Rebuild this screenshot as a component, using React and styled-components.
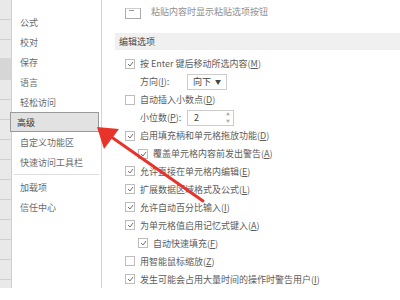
import styled, { createGlobalStyle } from "styled-components";

const GlobalStyle = createGlobalStyle`
    html, body { margin: 0; padding: 0; background: #fff; }
    body {
        font-family: "Noto Sans CJK SC", "Noto Sans", sans-serif;
        font-size: 9px;
        color: #5c5c5c;
    }
`;

const Page = styled.div`
    position: relative;
    width: 400px;
    height: 300px;
    overflow: hidden;
    display: flex;
    align-items: flex-start;
`;

const Sheet = styled.div`
    width: 11px;
    height: 288px;
    flex-shrink: 0;
    background:
        linear-gradient(#d6d6d6, #d6d6d6) 0 58px / 100% 22px no-repeat,
        repeating-linear-gradient(#e9e9e9 0 19px, #cfcfcf 19px 20px);
`;

const Sidebar = styled.div`
    width: 91px;
    height: 288px;
    flex-shrink: 0;
    border-left: 1px solid #cfcfcf;
    border-right: 1px solid #d4d4d4;
    padding-top: 12px;
    box-sizing: border-box;
    display: flex;
    flex-direction: column;
`;

const NavItem = styled.div`
    height: 20px;
    display: flex;
    align-items: center;
    padding-left: ${(p) => (p.$active ? "6px" : "8px")};
    margin-right: 2px;
    margin-left: ${(p) => (p.$active ? "-2px" : "0")};
    box-sizing: border-box;
    color: ${(p) => (p.$active ? "#333" : "#6a6a6a")};
    background: ${(p) => (p.$active ? "#e2e2e2" : "transparent")};
    border: ${(p) => (p.$active ? "1px solid #9a9a9a" : "none")};
`;

const NavSep = styled.div`
    height: 1px;
    background: #dedede;
    margin: 2px;
`;

const Main = styled.div`
    flex: 1;
    height: 288px;
    padding-left: 13px;
    display: flex;
    flex-direction: column;
`;

const TopRow = styled.div`
    height: 20px;
    display: flex;
    align-items: center;
    gap: 10px;
    padding-left: 10px;
    margin-top: 2px;
    color: #909090;
`;

const TopIcon = styled.div`
    width: 14px;
    height: 9px;
    margin-top: 4px;
    border: 1px solid #aaa;
    border-top-color: #ccc;
    position: relative;
    &::after {
        content: "";
        position: absolute;
        left: 3px;
        top: 1px;
        width: 5px;
        height: 1px;
        background: #999;
    }
`;

const SectionHead = styled.div`
    margin-top: 11px;
    height: 17px;
    background: #f0f0f0;
    display: flex;
    align-items: center;
    padding-left: 4px;
    color: #4a4a4a;
    margin-bottom: 5px;
`;

const Row = styled.div`
    height: 18px;
    display: flex;
    align-items: center;
    padding-left: ${(p) => (p.$indent ? "23px" : "10px")};
    white-space: nowrap;
`;

const Box = styled.span`
    width: 8px;
    height: 8px;
    border: 1px solid #bdbdbd;
    background: #fff;
    margin-right: 5px;
    flex-shrink: 0;
    display: flex;
    align-items: center;
    justify-content: center;
`;

const Label = styled.span`
    width: 47px;
    margin-left: 15px;
`;

const Select = styled.div`
    width: 40px;
    height: 16px;
    box-sizing: border-box;
    border: 1px solid #cccccc;
    display: flex;
    align-items: center;
    justify-content: space-between;
    padding: 0 5px;
    color: #444;
`;

const Spinner = styled.div`
    width: 47px;
    height: 16px;
    box-sizing: border-box;
    border: 1px solid #cccccc;
    display: flex;
    align-items: center;
    justify-content: space-between;
    padding: 0 3px 0 6px;
    color: #444;
`;

const Arrows = styled.div`
    display: flex;
    flex-direction: column;
    gap: 3px;
    font-size: 4px;
    line-height: 4px;
    color: #b0b0b0;
`;

const Overlay = styled.svg`
    position: absolute;
    left: 0;
    top: 0;
    pointer-events: none;
`;

const Check = () => (
    <svg width="7" height="6" viewBox="0 0 7 6">
        <path d="M1 3 L3 5 L6 1" fill="none" stroke="#707070" strokeWidth="1" />
    </svg>
);

const CheckRow = ({ checked, indent, children }) => (
    <Row $indent={indent}>
        <Box>{checked && <Check />}</Box>
        <span>{children}</span>
    </Row>
);

const navItems = ["公式", "校对", "保存", "语言", "轻松访问", "高级", "自定义功能区", "快速访问工具栏"];

export default function App() {
    return (
        <>
            <GlobalStyle />
            <Page>
                <Sheet />
                <Sidebar>
                    {navItems.map((n) => (
                        <NavItem key={n} $active={n === "高级"}>{n}</NavItem>
                    ))}
                    <NavSep />
                    <NavItem>加载项</NavItem>
                    <NavItem>信任中心</NavItem>
                </Sidebar>
                <Main>
                    <TopRow>
                        <TopIcon />
                        <span>粘贴内容时显示粘贴选项按钮</span>
                    </TopRow>
                    <SectionHead>编辑选项</SectionHead>
                    <CheckRow checked>按 Enter 键后移动所选内容(<u>M</u>)</CheckRow>
                    <Row>
                        <Label>方向(<u>I</u>):</Label>
                        <Select>
                            <span>向下</span>
                            <span style={{ fontSize: 6 }}>▼</span>
                        </Select>
                    </Row>
                    <CheckRow>自动插入小数点(<u>D</u>)</CheckRow>
                    <Row>
                        <Label>小位数(<u>P</u>):</Label>
                        <Spinner>
                            <span>2</span>
                            <Arrows>
                                <span>▲</span>
                                <span>▼</span>
                            </Arrows>
                        </Spinner>
                    </Row>
                    <CheckRow checked>启用填充柄和单元格拖放功能(<u>D</u>)</CheckRow>
                    <CheckRow checked indent>覆盖单元格内容前发出警告(<u>A</u>)</CheckRow>
                    <CheckRow checked>允许直接在单元格内编辑(<u>E</u>)</CheckRow>
                    <CheckRow checked>扩展数据区域格式及公式(<u>L</u>)</CheckRow>
                    <CheckRow checked>允许自动百分比输入(<u>I</u>)</CheckRow>
                    <CheckRow checked>为单元格值启用记忆式键入(<u>A</u>)</CheckRow>
                    <CheckRow checked indent>自动快速填充(<u>F</u>)</CheckRow>
                    <CheckRow>用智能鼠标缩放(<u>Z</u>)</CheckRow>
                    <CheckRow checked>发生可能会占用大量时间的操作时警告用户(<u>I</u>)</CheckRow>
                </Main>
                <Overlay width="400" height="300" viewBox="0 0 400 300">
                    <line x1="203" y1="201" x2="110" y2="136" stroke="#e8332b" strokeWidth="3" strokeLinecap="round" />
                    <polygon points="97,127 119,129 104,149" fill="#e8332b" />
                </Overlay>
            </Page>
        </>
    );
}
